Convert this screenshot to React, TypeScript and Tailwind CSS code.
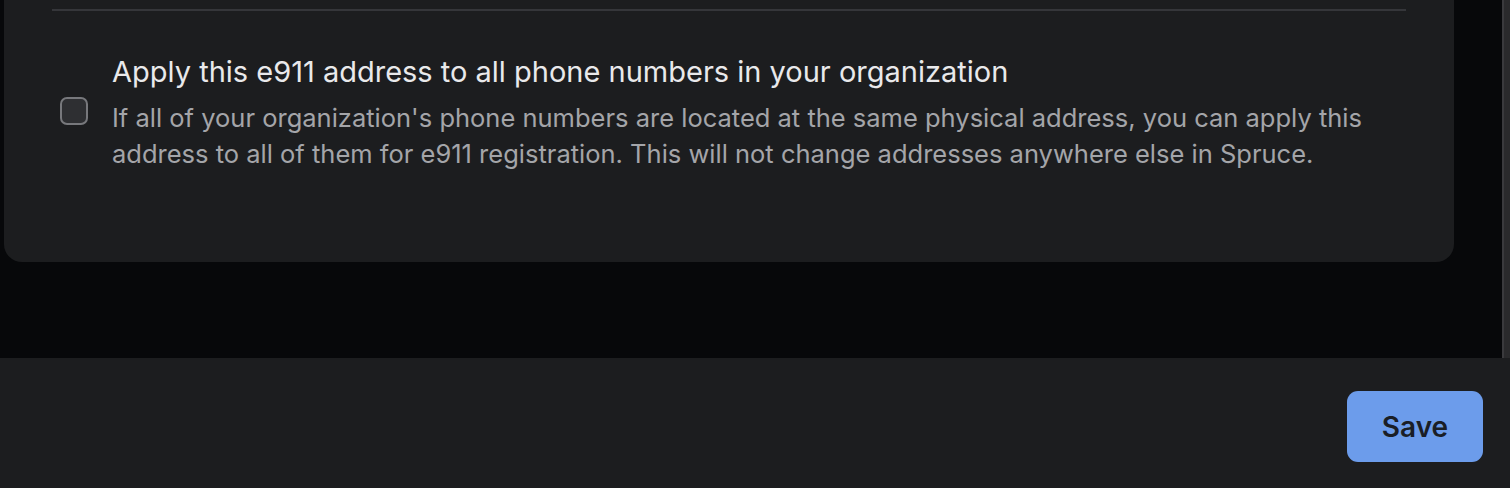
export default function App() {
  return (
    <div className="flex h-[488px] w-[1510px] flex-col overflow-hidden bg-[#07080a] font-['Inter','Liberation_Sans',sans-serif]">
      <div className="flex h-[358px] shrink-0">
        <div className="flex-1">
          <div className="ml-[4px] h-[262px] w-[1450px] rounded-b-[18px] bg-[#1c1d1f] px-[48px] pt-[9px]">
            <div className="h-[2px] w-full bg-[#35363a]" />
            <div className="flex items-start pt-[43px]">
              <div className="mt-[43px] ml-[8px] mr-[24px] h-[28px] w-[28px] shrink-0 rounded-[7px] border-2 border-[#77787c] bg-[#2e2f32]" />
              <div className="flex flex-col">
                <p className="text-[29px] leading-[36px] text-[#e9e9eb]">
                  Apply this e911 address to all phone numbers in your organization
                </p>
                <p className="mt-[10px] text-[25.5px] leading-[36px] text-[#a4a5a9]">
                  If all of your organization's phone numbers are located at the same physical address, you can apply this
                  <br />
                  address to all of them for e911 registration. This will not change addresses anywhere else in Spruce.
                </p>
              </div>
            </div>
          </div>
        </div>
        <div className="w-[8px] border-l-2 border-[#3a3a3d] bg-[#2a2a2c]" />
      </div>
      <div className="flex flex-1 items-start justify-end bg-[#1c1d1f] pt-[33px] pr-[27px]">
        <button className="h-[71px] w-[136px] rounded-[11px] bg-[#6c9ceb] text-[28px] font-semibold text-[#1a1e26]">
          Save
        </button>
      </div>
    </div>
  );
}
